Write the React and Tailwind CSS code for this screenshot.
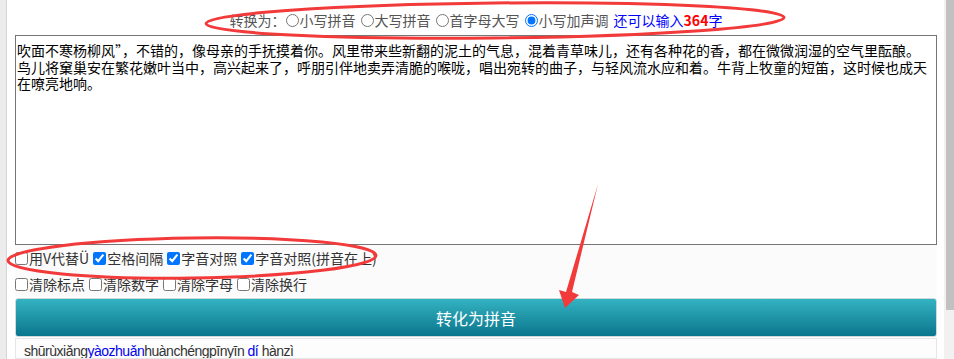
import { useState } from 'react';

const TEXT =
  '吹面不寒杨柳风”，不错的，像母亲的手抚摸着你。风里带来些新翻的泥土的气息，混着青草味儿，还有各种花的香，都在微微润湿的空气里酝酿。\n' +
  '鸟儿将窠巢安在繁花嫩叶当中，高兴起来了，呼朋引伴地卖弄清脆的喉咙，唱出宛转的曲子，与轻风流水应和着。牛背上牧童的短笛，这时候也成天\n' +
  '在嘹亮地响。';

const modes = ['小写拼音', '大写拼音', '首字母大写', '小写加声调'];

const Check = ({ label, checked }) => (
  <label className="flex items-center">
    <input type="checkbox" defaultChecked={checked} className="m-0 h-[13px] w-[13px] accent-[#0075ff]" />
    <span className="ml-[1px]">{label}</span>
  </label>
);

const App = () => {
  const [mode, setMode] = useState('小写加声调');

  const pinyin = [
    ['shūrù', false],
    ['xiǎng', false],
    ['yào', true],
    ['zhuǎn', true],
    ['huàn', false],
    ['chéng', false],
    ['pīnyīn', false],
    [' dí', true],
    [' hànzì', false],
  ];

  return (
    <div className="relative flex h-[359px] w-[954px] overflow-hidden bg-white font-['Noto_Sans_CJK_SC',sans-serif]">
      <div className="w-[7px] shrink-0 border-r border-[#d4d4d4] bg-[#ececec]" />

      <main className="flex min-w-0 flex-1 flex-col pl-[8px] pr-[7px]">
        <div className="flex h-[35px] shrink-0 items-center justify-center pt-[6px] text-[14px] text-[#555]">
          <span>转换为：</span>
          {modes.map((m) => (
            <label key={m} className="mr-[5px] flex items-center">
              <input
                type="radio"
                name="mode"
                checked={mode === m}
                onChange={() => setMode(m)}
                className="m-0 h-[13px] w-[13px] accent-[#0075ff]"
              />
              <span className="ml-[1px]">{m}</span>
            </label>
          ))}
          <span className="text-[#0000ff]">
            还可以输入<b className="text-[#ff0000]">364</b>字
          </span>
        </div>

        <textarea
          wrap="off"
          defaultValue={TEXT}
          className="h-[210px] w-full shrink-0 resize-none overflow-hidden border border-[#767676] bg-white px-[1px] pt-[6px] text-[14px] leading-[16.6px] text-black outline-none font-['Noto_Sans_CJK_SC',sans-serif]"
        />

        <div className="shrink-0 bg-[#fbfbfb] text-[14px] text-[#333]">
          <div className="flex h-[26px] items-center gap-[4px]">
            <Check label="用V代替Ü" />
            <Check label="空格间隔" checked />
            <Check label="字音对照" checked />
            <Check label="字音对照(拼音在上)" checked />
          </div>
          <div className="flex h-[26px] items-center gap-[4px]">
            <Check label="清除标点" />
            <Check label="清除数字" />
            <Check label="清除字母" />
            <Check label="清除换行" />
          </div>
        </div>

        <button className="mt-[1px] h-[39px] w-full shrink-0 rounded-[3px] border border-[#cfd8da] bg-gradient-to-b from-[#33b3c2] to-[#08768d] text-[16px] text-white">
          转化为拼音
        </button>

        <div className="mt-[1px] min-h-0 flex-1 overflow-hidden border border-[#e6e6e6] bg-[#fdfdfd] px-[8px] pt-[2px] text-[14px] leading-[20px] tracking-[-0.5px] text-[#333] font-['Liberation_Sans',sans-serif]">
          {pinyin.map(([w, blue], i) => (
            <span key={i} className={blue ? 'text-[#0000ee]' : ''}>
              {w}
            </span>
          ))}
        </div>
      </main>

      <div className="w-[10px] shrink-0 bg-[#f1f1f1]">
        <div className="ml-auto h-[310px] w-[8px] bg-[#c1c1c1]" />
      </div>

      <svg className="pointer-events-none absolute inset-0" width="954" height="359" viewBox="0 0 954 359">
        <ellipse cx="495" cy="20.5" rx="289" ry="17.5" fill="none" stroke="#f23a3a" strokeWidth="3" transform="rotate(-0.6 495 20.5)" />
        <ellipse cx="192" cy="258" rx="184" ry="20" fill="none" stroke="#f23a3a" strokeWidth="3" transform="rotate(-0.8 192 258)" />
        <polygon points="598,184 572,292 579,295 565,308 559,290 566,292" fill="#f23a3a" />
      </svg>
    </div>
  );
};

export default App;
